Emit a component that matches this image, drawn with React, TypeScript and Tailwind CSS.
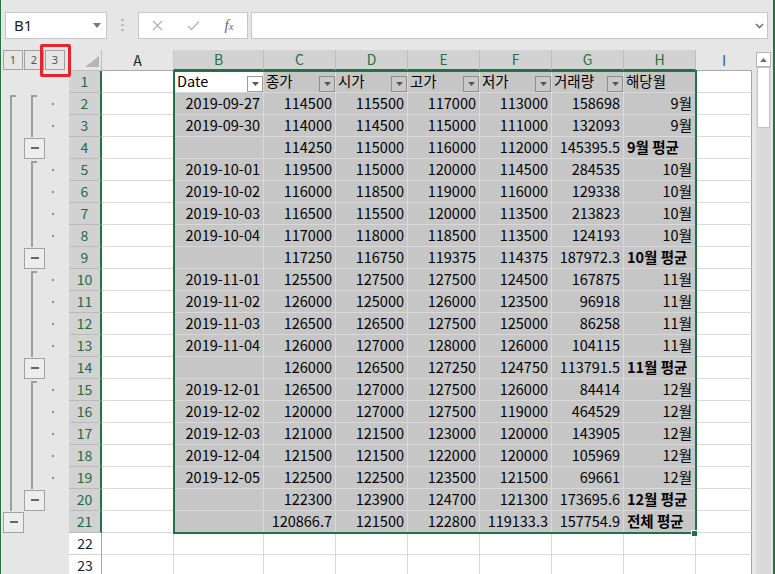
import React from 'react';

const ROWS: string[][] = [
  ['2019-09-27', '114500', '115500', '117000', '113000', '158698', '9월'],
  ['2019-09-30', '114000', '114500', '115000', '111000', '132093', '9월'],
  ['', '114250', '115000', '116000', '112000', '145395.5', '9월 평균'],
  ['2019-10-01', '119500', '115000', '120000', '114500', '284535', '10월'],
  ['2019-10-02', '116000', '118500', '119000', '116000', '129338', '10월'],
  ['2019-10-03', '116500', '115500', '120000', '113500', '213823', '10월'],
  ['2019-10-04', '117000', '118000', '118500', '113500', '124193', '10월'],
  ['', '117250', '116750', '119375', '114375', '187972.3', '10월 평균'],
  ['2019-11-01', '125500', '127500', '127500', '124500', '167875', '11월'],
  ['2019-11-02', '126000', '125000', '126000', '123500', '96918', '11월'],
  ['2019-11-03', '126500', '126500', '127500', '125000', '86258', '11월'],
  ['2019-11-04', '126000', '127000', '128000', '126000', '104115', '11월'],
  ['', '126000', '126500', '127250', '124750', '113791.5', '11월 평균'],
  ['2019-12-01', '126500', '127000', '127500', '126000', '84414', '12월'],
  ['2019-12-02', '120000', '127000', '127500', '119000', '464529', '12월'],
  ['2019-12-03', '121000', '121500', '123000', '120000', '143905', '12월'],
  ['2019-12-04', '121500', '121500', '122000', '120000', '105969', '12월'],
  ['2019-12-05', '122500', '122500', '123500', '121500', '69661', '12월'],
  ['', '122300', '123900', '124700', '121300', '173695.6', '12월 평균'],
  ['', '120866.7', '121500', '122800', '119133.3', '157754.9', '전체 평균'],
];

const HEADERS = ['Date', '종가', '시가', '고가', '저가', '거래량', '해당월'];

const detail = new Set([2, 3, 5, 6, 7, 8, 10, 11, 12, 13, 15, 16, 17, 18, 19]);
const groupStart = new Set([2, 5, 10, 15]);
const l2btn = new Set([4, 9, 14, 20]);

const LINE = '#9e9e9e';

function OutlineBtn({ x }: { x: number }) {
  return (
    <g>
      <rect x={x + 0.5} y={1.5} width={20} height={20} fill="#ededed" stroke="#a2a2a2" />
      <rect x={x + 7} y={10} width={8} height={2} fill="#666666" />
    </g>
  );
}

function Gutter({ n }: { n: number }) {
  return (
    <svg width="68" height="22" className="block shrink-0">
      {n >= 2 && n <= 20 && (
        <rect x={9} y={n === 2 ? 2 : 0} width={2} height={n === 2 ? 20 : 22} fill={LINE} />
      )}
      {n === 2 && <rect x={9} y={2} width={6} height={2} fill={LINE} />}
      {detail.has(n) && (
        <rect
          x={30}
          y={groupStart.has(n) ? 2 : 0}
          width={2}
          height={groupStart.has(n) ? 20 : 22}
          fill={LINE}
        />
      )}
      {groupStart.has(n) && <rect x={30} y={2} width={6} height={2} fill={LINE} />}
      {detail.has(n) && <rect x={51} y={10} width={2} height={2} fill="#8c8c8c" />}
      {l2btn.has(n) && <OutlineBtn x={23} />}
      {n === 21 && <OutlineBtn x={2} />}
    </svg>
  );
}

function RowHeader({ n }: { n: number }) {
  const sel = n <= 21;
  return sel ? (
    <div className="w-[33px] h-[22px] shrink-0 bg-[#d2d2d2] border-b border-b-[#bababa] border-r-2 border-r-[#217346] flex items-center justify-center text-[14px] text-[#1f6b45]">
      {n}
    </div>
  ) : (
    <div className="w-[33px] h-[22px] shrink-0 bg-white border-b border-b-[#d4d4d4] border-r border-r-[#a8a8a8] flex items-center justify-center text-[14px] text-[#222222]">
      {n}
    </div>
  );
}

function FilterBtn({ white }: { white?: boolean }) {
  return (
    <div
      className={
        white
          ? 'w-[16px] h-[16px] shrink-0 self-end border border-[#9c9c9c] bg-white flex items-center justify-center'
          : 'w-[16px] h-[16px] shrink-0 self-end border border-[#8e8e8e] bg-[#c9c9c9] flex items-center justify-center'
      }
    >
      <svg width="7" height="4" viewBox="0 0 7 4">
        <path d="M0 0H7L3.5 4Z" fill="#555555" />
      </svg>
    </div>
  );
}

const SEL = 'h-[22px] shrink-0 bg-[#c6c6c6] border-r border-b border-[#d9d9d9] flex items-center whitespace-nowrap';
const EMPTY_A = 'w-[72px] h-[22px] shrink-0 bg-white border-r border-b border-[#d9d9d9]';
const EMPTY_I = 'w-[56px] h-[22px] shrink-0 bg-white border-b border-b-[#d9d9d9] border-r border-r-[#a4a4a4]';

function HeaderRow() {
  return (
    <div className="flex h-[22px]">
      <Gutter n={1} />
      <RowHeader n={1} />
      <div className={EMPTY_A} />
      <div className="w-[90px] h-[22px] shrink-0 bg-white border-r border-b border-[#d9d9d9] flex items-center justify-between pl-[3px]">
        <span className="leading-none">{HEADERS[0]}</span>
        <FilterBtn white />
      </div>
      {HEADERS.slice(1, 6).map((h) => (
        <div key={h} className={`w-[72px] ${SEL} justify-between pl-[2px]`}>
          <span className="leading-none">{h}</span>
          <FilterBtn />
        </div>
      ))}
      <div className={`w-[72px] ${SEL} justify-start pl-[2px]`}>
        <span className="leading-none">{HEADERS[6]}</span>
      </div>
      <div className={EMPTY_I} />
    </div>
  );
}

function DataRow({ n, r }: { n: number; r: string[] }) {
  const avg = r[6].includes('평균');
  return (
    <div className="flex h-[22px]">
      <Gutter n={n} />
      <RowHeader n={n} />
      <div className={EMPTY_A} />
      <div className={`w-[90px] ${SEL} justify-end pr-[3px]`}>
        <span className="leading-none">{r[0]}</span>
      </div>
      {r.slice(1, 6).map((v, i) => (
        <div key={i} className={`w-[72px] ${SEL} justify-end pr-[3px]`}>
          <span className="leading-none">{v}</span>
        </div>
      ))}
      {avg ? (
        <div className={`w-[72px] ${SEL} justify-start pl-[3px] font-bold`}>
          <span className="leading-none">{r[6]}</span>
        </div>
      ) : (
        <div className={`w-[72px] ${SEL} justify-end pr-[3px]`}>
          <span className="leading-none">{r[6]}</span>
        </div>
      )}
      <div className={EMPTY_I} />
    </div>
  );
}

function EmptyRow({ n }: { n: number }) {
  return (
    <div className="flex h-[22px]">
      <Gutter n={n} />
      <RowHeader n={n} />
      <div className={EMPTY_A} />
      <div className="w-[90px] h-[22px] shrink-0 bg-white border-r border-b border-[#d9d9d9]" />
      {[0, 1, 2, 3, 4, 5].map((i) => (
        <div key={i} className="w-[72px] h-[22px] shrink-0 bg-white border-r border-b border-[#d9d9d9]" />
      ))}
      <div className={EMPTY_I} />
    </div>
  );
}

function ColumnHeaders() {
  const letters = ['C', 'D', 'E', 'F', 'G', 'H'];
  return (
    <div className="flex h-[21px]">
      <div className="w-[68px] h-[21px] shrink-0 flex items-start pl-[2px] gap-[1px]">
        {['1', '2', '3'].map((t) => (
          <div
            key={t}
            className="w-[20px] h-[20px] border border-[#a0a0a0] flex items-center justify-center text-[11px] text-[#555555] font-['Noto_Sans',sans-serif]"
          >
            {t}
          </div>
        ))}
      </div>
      <div className="w-[33px] h-[21px] shrink-0 border-r border-b border-[#bdbdbd] flex items-end justify-end pr-[2px] pb-[3px]">
        <svg width="14" height="11" viewBox="0 0 14 11">
          <path d="M14 0V11H0Z" fill="#b5b5b5" />
        </svg>
      </div>
      <div className="w-[72px] h-[21px] shrink-0 border-r border-r-[#c8c8c8] border-b border-b-[#ababab] flex items-center justify-center text-[14px] text-[#222222]">
        A
      </div>
      <div className="w-[90px] h-[21px] shrink-0 bg-[#d2d2d2] border-r border-r-[#bdbdbd] border-b-2 border-b-[#217346] flex items-center justify-center text-[14px] text-[#217346]">
        B
      </div>
      {letters.map((l) => (
        <div
          key={l}
          className="w-[72px] h-[21px] shrink-0 bg-[#d2d2d2] border-r border-r-[#bdbdbd] border-b-2 border-b-[#217346] flex items-center justify-center text-[14px] text-[#217346]"
        >
          {l}
        </div>
      ))}
      <div className="w-[56px] h-[21px] shrink-0 border-b border-b-[#ababab] flex items-center justify-center text-[14px] text-[#2a5f9e]">
        I
      </div>
    </div>
  );
}

function TopBar() {
  return (
    <div className="h-[50px] flex items-start pt-[12px] font-['Noto_Sans',sans-serif]">
      <div className="ml-[4px] w-[102px] h-[27px] bg-white border border-[#c6c6c6] flex items-center justify-between pl-[8px] pr-[5px]">
        <span className="text-[15px] leading-none text-[#222222]">B1</span>
        <svg width="8" height="5" viewBox="0 0 8 5">
          <path d="M0 0H8L4 5Z" fill="#777777" />
        </svg>
      </div>
      <div className="w-[31px] h-[27px] flex items-center justify-center">
        <svg width="3" height="13" viewBox="0 0 3 13">
          <rect x="0.5" y="0" width="2" height="2" fill="#a9a9a9" />
          <rect x="0.5" y="5" width="2" height="2" fill="#a9a9a9" />
          <rect x="0.5" y="10" width="2" height="2" fill="#a9a9a9" />
        </svg>
      </div>
      <div className="w-[110px] h-[27px] bg-white border border-[#c6c6c6] flex items-center">
        <div className="w-[36px] flex justify-center">
          <svg width="11" height="11" viewBox="0 0 11 11">
            <path d="M1 1L10 10M10 1L1 10" stroke="#b4b4b4" strokeWidth="1.3" fill="none" />
          </svg>
        </div>
        <div className="w-[36px] flex justify-center">
          <svg width="13" height="11" viewBox="0 0 13 11">
            <path d="M1 6L4.5 9.5L12 1.5" stroke="#b4b4b4" strokeWidth="1.4" fill="none" />
          </svg>
        </div>
        <div className="w-[36px] flex justify-center">
          <span className="font-['Liberation_Serif',serif] italic text-[15px] leading-none text-[#6a6a6a]">
            f<span className="text-[11px]">x</span>
          </span>
        </div>
      </div>
      <div className="ml-[3px] w-[517px] h-[27px] bg-white border border-[#c6c6c6] flex items-center justify-end pr-[3px]">
        <svg width="9" height="6" viewBox="0 0 9 6">
          <path d="M1 1L4.5 4.5L8 1" stroke="#777777" strokeWidth="1.6" fill="none" />
        </svg>
      </div>
    </div>
  );
}

function ScrollBar() {
  return (
    <div className="w-[21px] shrink-0 flex flex-col">
      <div className="h-[2px]" />
      <div className="ml-[4px] w-[15px] h-[15px] bg-white border border-[#b4b4b4] flex items-center justify-center">
        <svg width="7" height="4" viewBox="0 0 7 4">
          <path d="M0 4H7L3.5 0Z" fill="#6e6e6e" />
        </svg>
      </div>
      <div className="ml-[4px] w-[15px] flex-1 bg-[#dadada] pt-[0px]">
        <div className="mx-[1px] w-[13px] h-[61px] bg-white border border-[#c4c4c4]" />
      </div>
    </div>
  );
}

export default function App() {
  return (
    <div className="relative w-[775px] h-[574px] overflow-hidden bg-[#e6e6e6] border-l border-r-2 border-[#217346] font-['Noto_Sans_CJK_KR','Noto_Sans',sans-serif] text-[14.5px] text-black">
      <TopBar />
      <div className="flex">
        <div className="relative w-[751px] shrink-0 flex flex-col">
          <ColumnHeaders />
          <HeaderRow />
          {ROWS.map((r, i) => (
            <DataRow key={i} n={i + 2} r={r} />
          ))}
          <EmptyRow n={22} />
          <EmptyRow n={23} />
          <div className="absolute left-[172px] top-[20px] w-[524px] h-[464px] border-2 border-[#217346] pointer-events-none" />
          <div className="absolute left-[690px] top-[480px] w-[7px] h-[7px] bg-[#217346] border border-white" />
        </div>
        <ScrollBar />
      </div>
      <div className="absolute left-[39px] top-[44px] w-[31px] h-[33px] border-[3px] border-[#e8232b] rounded-[2px]" />
    </div>
  );
}
